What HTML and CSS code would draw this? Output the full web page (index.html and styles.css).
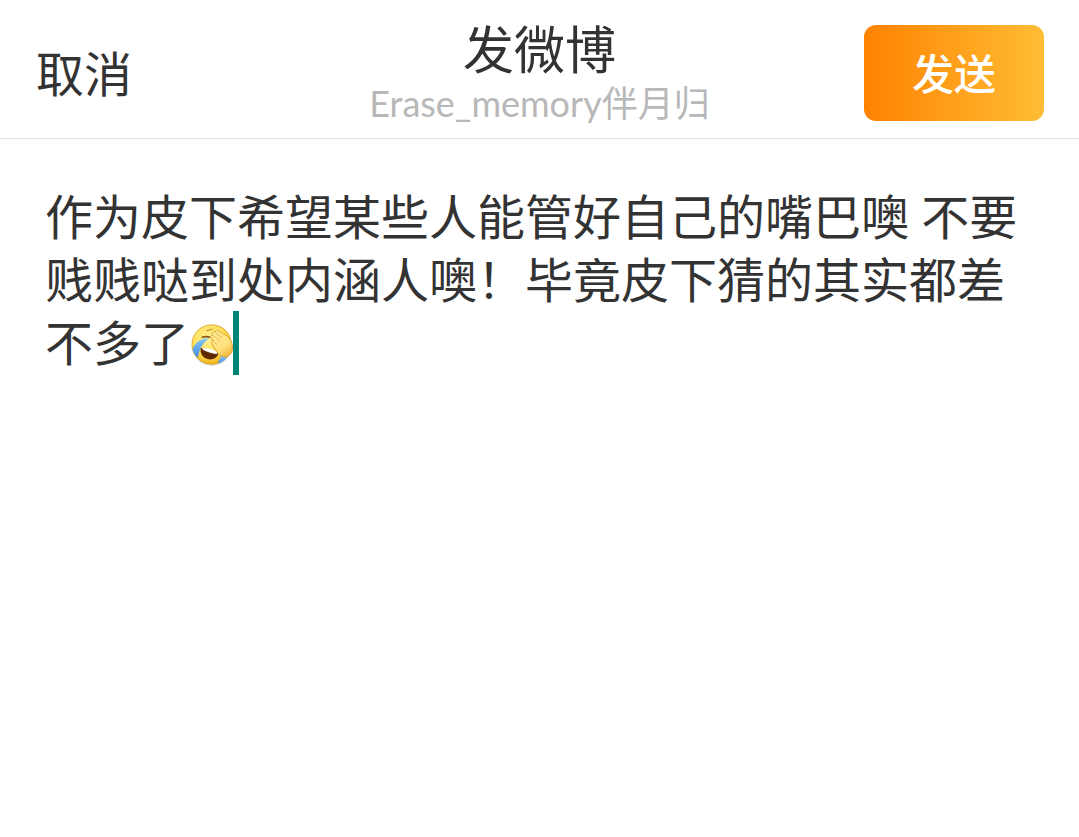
FILE: index.html
```html
<!DOCTYPE html>
<html lang="zh-CN">
<head>
<meta charset="utf-8">
<meta name="viewport" content="width=device-width, initial-scale=1">
<title>发微博</title>
<link rel="stylesheet" href="styles.css">
</head>
<body>
<header class="topbar">
  <button class="cancel" type="button">取消</button>
  <div class="heading">
    <h1 class="title">发微博</h1>
    <p class="account">Erase_memory伴月归</p>
  </div>
  <button class="send" type="button">发送</button>
</header>
<main class="composer">
  <div class="editor" contenteditable="true" role="textbox" aria-multiline="true" aria-label="微博正文" spellcheck="false">作为皮下希望某些人能管好自己的嘴巴噢 不要贱贱哒到处内涵人噢！毕竟皮下猜的其实都差不多了<svg class="emoji" viewBox="0 0 42 42" role="img" aria-label="笑哭捂脸">
    <defs>
      <radialGradient id="face" cx=".42" cy=".35" r=".65">
        <stop offset="0" stop-color="#fff09a"/>
        <stop offset=".6" stop-color="#ffe05a"/>
        <stop offset="1" stop-color="#f3b51c"/>
      </radialGradient>
      <linearGradient id="hand" x1="0" y1="0" x2=".7" y2="1">
        <stop offset="0" stop-color="#ffed9a"/>
        <stop offset=".7" stop-color="#ffe07c"/>
        <stop offset="1" stop-color="#f3b840"/>
      </linearGradient>
      <linearGradient id="tear" x1="0" y1="0" x2="0" y2="1">
        <stop offset="0" stop-color="#82c8fa"/>
        <stop offset="1" stop-color="#438ee8"/>
      </linearGradient>
    </defs>
    <ellipse cx="21" cy="23" rx="19.500" ry="19" fill="#000" opacity=".12"/>
    <circle cx="20.700" cy="20.500" r="19.700" fill="url(#face)" stroke="#d99b18" stroke-width=".8"/>
    <path d="M10.500 13.300q5-2.400 8.800 0-4-.6-8.800 0" fill="#8b5012" stroke="#8b5012" stroke-width=".9"/>
    <path d="M15.500 6.700q3-.3 6-1.800" fill="none" stroke="#b77a1a" stroke-width="1"/>
    <path d="M18.500 14.300C12 13.600 3.500 17.500 1.500 26c1.200 3 3 5.600 5.500 7.500C8.500 25 11 19 18.500 14.300z" fill="url(#tear)"/>
    <path d="M9.800 24c4.700.2 11.800 2 17.600 5-1 5-5.300 6.800-9.600 6.300C12 34.500 8.700 29.500 9.800 24z" fill="#602800"/>
    <path d="M11.500 23.800c5 .2 11 1.800 15.500 4.700-.6 1.200-1.300 1.600-2.300 1.600C20 29.300 15 27.800 11.500 25.500z" fill="#fff"/>
    <path d="M26.500 39.300c1.700-2.900 2.700-5.200 3.900-7.200l5.200 1.900c-2.200 2.700-5.400 4.600-9.100 5.300z" fill="url(#tear)"/>
    <path d="M20 14.200c-.8-1.700.1-3 1.700-3-1.500-2 .1-4 2-3.200.5-1.600 2.400-1.800 3.800-.9l8.200 4.700c3.500 2.300 5.700 6.200 5.900 11.400.1 6.800-4.400 10.600-9.400 9.300-3.800-1-6.400-4.300-8.300-7.800l-3-5.200c-.9-1.900 0-3.200 1.500-3z" fill="url(#hand)" stroke="#d79b2d" stroke-width=".8"/>
    <path d="M20.500 15.500l5.500 5.200M21.700 11.200l7 5.700M23.700 8l7 5.800" fill="none" stroke="#dba53c" stroke-width=".7" stroke-linecap="round"/>
  </svg><span class="caret"></span></div>
</main>
</body>
</html>
```
FILE: styles.css
```css
* {
  box-sizing: border-box;
}

body {
  margin: 0;
  min-height: 100vh;
  background: #fff;
  color: #333;
  font-family: Lato, "Noto Sans CJK SC", sans-serif;
}

.topbar {
  display: grid;
  grid-template-columns: 1fr auto 1fr;
  align-items: center;
  padding: 20px 35px 12px;
  border-bottom: 1px solid #e4e4e4;
}

button {
  border: 0;
  font-family: inherit;
  cursor: pointer;
}

.cancel {
  justify-self: start;
  padding: 2px 1px 0;
  background: none;
  color: inherit;
  font-size: 48px;
  line-height: 64px;
}

.heading {
  text-align: center;
}

.title {
  margin: 0;
  font-size: 51px;
  font-weight: 400;
  line-height: 60px;
}

.account {
  margin: 0;
  color: #b8b8b8;
  font-size: 36px;
  line-height: 46px;
}

.send {
  justify-self: end;
  padding: 17px 48px 15px;
  border-radius: 12px;
  background: linear-gradient(90deg, #ff8200, #ffbd35);
  color: #fff;
  font-size: 42px;
  font-weight: 500;
  line-height: 64px;
}

.composer {
  padding: 46px 45px;
}

.editor {
  min-height: 320px;
  outline: none;
  font-size: 48px;
  line-height: 63px;
  overflow-wrap: anywhere;
}

.emoji {
  width: 42px;
  height: 42px;
  margin-left: 2px;
  vertical-align: -5px;
}

.caret {
  display: inline-block;
  width: 6px;
  height: 64px;
  margin: -8px 0;
  background: #018577;
  vertical-align: -6px;
}
```
